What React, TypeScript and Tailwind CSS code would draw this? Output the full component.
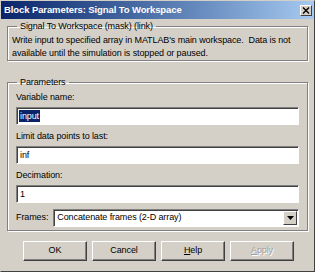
import React from 'react'

const sunken =
  'border border-t-[#808080] border-l-[#808080] border-r-white border-b-white shadow-[inset_1px_1px_0_#404040]'

function Field({ value, selected }: { value: string; selected?: boolean }) {
  return (
    <div className={`h-[18px] bg-white flex items-center pl-[2px] ${sunken}`}>
      {selected ? (
        <span className="bg-[#0a246a] text-white leading-[12px] px-[1px]">{value}</span>
      ) : (
        <span className="leading-[12px] pl-[1px]">{value}</span>
      )}
    </div>
  )
}

function Button({ label, disabled, accel }: { label: string; disabled?: boolean; accel?: string }) {
  return (
    <div
      className={`w-[64px] h-[20px] flex items-center justify-center border border-t-white border-l-white border-r-[#404040] border-b-[#404040] shadow-[inset_-1px_-1px_0_#808080] ${
        disabled ? 'text-[#a0a0a0] [text-shadow:1px_1px_0_white]' : 'text-black'
      }`}
    >
      {accel ? (
        <span>
          <span className="underline">{accel}</span>
          {label.slice(1)}
        </span>
      ) : (
        label
      )}
    </div>
  )
}

function App() {
  return (
    <div
      className="w-[315px] h-[272px] bg-[#d4d0c8] text-black text-[9px] tracking-[-0.1px] overflow-hidden border border-t-[#d4d0c8] border-l-[#d4d0c8] border-r-[#404040] border-b-[#404040] flex flex-col"
      style={{ fontFamily: '"Liberation Sans", Arial, sans-serif' }}
    >
      <div className="h-[18px] bg-gradient-to-r from-[#0a246a] to-[#a6caf0] flex items-center justify-between pl-[3px] pr-[2px]">
        <span className="text-white font-bold text-[9.5px] tracking-[-0.1px]">Block Parameters: Signal To Workspace</span>
        <div className="w-[12px] h-[11px] bg-[#d4d0c8] border border-t-white border-l-white border-r-[#404040] border-b-[#404040] flex items-center justify-center">
          <svg width="8" height="7" viewBox="0 0 8 7">
            <path d="M1 0.5 L7 6.5 M7 0.5 L1 6.5" stroke="black" strokeWidth="1.4" />
          </svg>
        </div>
      </div>

      <div className="px-[6px] pt-[1px] flex flex-col">
        <fieldset className="border border-[#808080] shadow-[inset_1px_1px_0_white,1px_1px_0_white] px-[4px] h-[41px]">
          <legend className="ml-[5px] px-[3px] leading-[13px]">Signal To Workspace (mask) (link)</legend>
          <p className="leading-[13px] mt-[1px]">
            Write input to specified array in MATLAB's main workspace.&nbsp; Data is not
            <br />
            available until the simulation is stopped or paused.
          </p>
        </fieldset>

        <fieldset className="mt-[15px] border border-[#808080] shadow-[inset_1px_1px_0_white,1px_1px_0_white] px-[8px] h-[155px]">
          <legend className="ml-[1px] px-[3px] leading-[13px]">Parameters</legend>
          <div className="flex flex-col">
            <div className="leading-[13px] mt-[2px] mb-[3px]">Variable name:</div>
            <Field value="input" selected />
            <div className="leading-[13px] mt-[5px] mb-[3px]">Limit data points to last:</div>
            <Field value="inf" />
            <div className="leading-[13px] mt-[5px] mb-[3px]">Decimation:</div>
            <Field value="1" />
            <div className="flex items-center mt-[6px] gap-[5px]">
              <span>Frames:</span>
              <div className={`flex-1 h-[18px] bg-white flex items-center justify-between pl-[3px] ${sunken}`}>
                <span>Concatenate frames (2-D array)</span>
                <div className="w-[14px] h-[14px] mr-[1px] bg-[#d4d0c8] border border-t-white border-l-white border-r-[#404040] border-b-[#404040] flex items-center justify-center">
                  <svg width="7" height="4" viewBox="0 0 7 4">
                    <path d="M0 0 H7 L3.5 4 Z" fill="black" />
                  </svg>
                </div>
              </div>
            </div>
          </div>
        </fieldset>

        <div className="flex gap-[5px] mt-[10px] ml-[16px]">
          <Button label="OK" />
          <Button label="Cancel" />
          <Button label="Help" accel="H" />
          <Button label="Apply" accel="A" disabled />
        </div>
      </div>
    </div>
  )
}

export default App
